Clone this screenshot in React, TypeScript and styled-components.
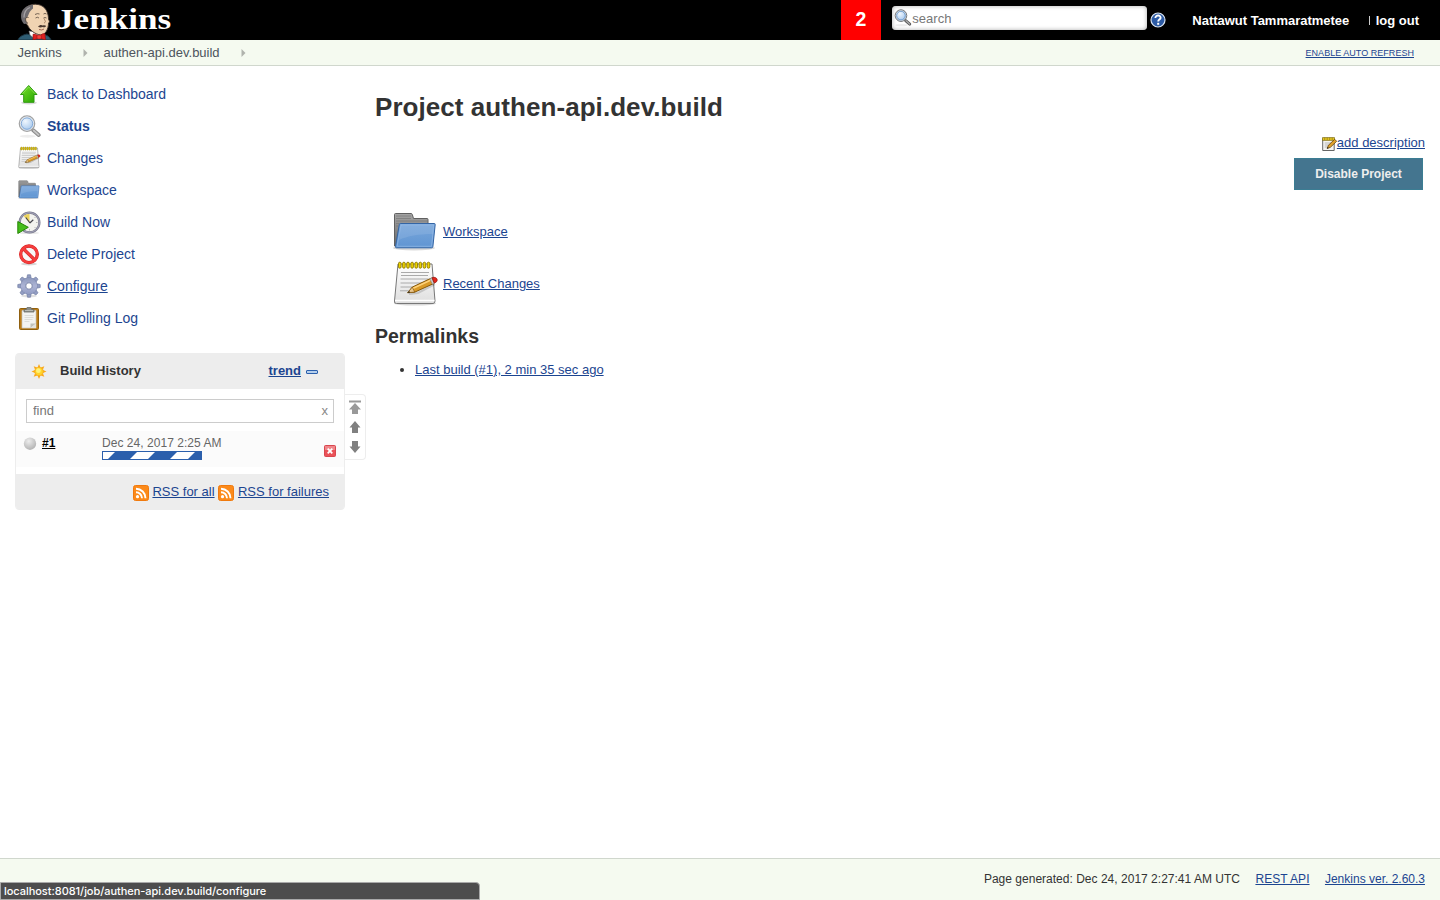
import React from "react";
import styled, { createGlobalStyle } from "styled-components";

const GlobalStyle = createGlobalStyle`
  * { box-sizing: border-box; }
  body {
    margin: 0;
    background: #fff;
    color: #333;
    font: 13px/16px "Liberation Sans", Helvetica, Arial, sans-serif;
  }
`;

const Page = styled.div`
  height: 900px;
  display: flex;
  flex-direction: column;
  position: relative;
  overflow: hidden;
`;

const Link = styled.a<{ $size?: number; $bold?: boolean; $track?: number }>`
  color: #1c4590;
  text-decoration: underline;
  text-underline-offset: 1px;
  white-space: nowrap;
  font-size: ${(p) => p.$size ?? 13}px;
  font-weight: ${(p) => (p.$bold ? 700 : 400)};
  letter-spacing: ${(p) => p.$track ?? 0}px;
`;

/* ---------- Header ---------- */

const Header = styled.header`
  height: 40px;
  flex: none;
  background: #000;
  color: #fff;
  display: flex;
  justify-content: space-between;
`;

const Brand = styled.div`
  display: flex;
  padding-left: 17px;
`;

const BrandName = styled.span`
  font: bold 30px/38px "Liberation Serif", Georgia, serif;
  margin-left: 3px;
  transform: scaleX(1.17);
  transform-origin: left center;
`;

const HeaderTools = styled.div`
  display: flex;
  align-items: center;
  padding-right: 21px;
`;

const AlertCount = styled.div`
  width: 40px;
  height: 40px;
  background: #f00;
  font: bold 19.5px/39px "Liberation Sans", Arial, sans-serif;
  text-align: center;
  margin: 0 11px 0 0;
  padding-right: 1px;
`;

const SearchBox = styled.label`
  width: 255px;
  height: 24px;
  margin: 0 3px 4px 0;
  padding-left: 2px;
  border-radius: 4px;
  background: #fff;
  box-shadow: inset 0 0 4px #aaa;
  display: flex;
  align-items: center;
`;

const SearchInput = styled.input`
  flex: 1;
  border: 0;
  outline: 0;
  padding: 0;
  background: transparent;
  font: 13px "Liberation Sans", Arial, sans-serif;
  &::placeholder { color: #777; }
`;

const HeaderText = styled.span<{ $gap: number; $track?: number }>`
  font-weight: bold;
  margin-left: ${(p) => p.$gap}px;
  letter-spacing: ${(p) => p.$track ?? 0}px;
  white-space: nowrap;
  line-height: 41px;
`;

const Divider = styled.i`
  width: 1px;
  height: 9px;
  background: #ccc;
  margin-left: 20px;
`;

/* ---------- Breadcrumbs ---------- */

const Crumbs = styled.nav`
  height: 26px;
  flex: none;
  background: #f5faf0;
  border-bottom: 1px solid #d0d7cd;
  display: flex;
  align-items: center;
  padding: 0 26px 0 17.6px;
`;

const Crumb = styled.span`
  color: #4d545d;
`;

const CrumbArrow = styled.svg`
  width: 5px;
  height: 8px;
  margin: 1px 15.500px 0 21.300px;
`;

const Spacer = styled.span`
  flex: 1;
`;

/* ---------- Columns ---------- */

const Body = styled.div`
  flex: 1;
  display: flex;
`;

const Sidebar = styled.aside`
  width: 345px;
  padding: 12px 0 0 15px;
`;

const TaskList = styled.div`
  padding-left: 2px;
  margin-bottom: 19px;
`;

const Task = styled.a<{ $active?: boolean; $hover?: boolean }>`
  height: 32px;
  display: flex;
  align-items: center;
  gap: 6px;
  color: #1c4590;
  font-size: 14px;
  font-weight: ${(p) => (p.$active ? 700 : 400)};
  text-decoration: ${(p) => (p.$hover ? "underline" : "none")};
  text-underline-offset: 1px;
`;

const HistoryPanel = styled.section`
  position: relative;
  width: 330px;
  height: 157px;
  border: 1px solid #ededed;
  border-radius: 4px;
`;

const HistoryHead = styled.div`
  height: 36px;
  margin-top: -1px;
  background: #ededed;
  border-radius: 4px 4px 0 0;
  display: flex;
  align-items: center;
  padding: 0 26px 0 15px;
`;

const HistoryTitle = styled.b`
  flex: 1;
  margin-left: 13px;
`;

const CollapseBar = styled.i`
  width: 12px;
  height: 4px;
  margin: 2px 0 0 5px;
  border: 1px solid #2b5fac;
  border-radius: 1px;
  background: #b5cfec;
`;

const FindBox = styled.label`
  height: 24px;
  margin: 10px 10px 8px;
  border: 1px solid #ccc;
  display: flex;
  align-items: center;
  padding: 0 5px 1px 6px;
  color: #888;
`;

const FindInput = styled.input`
  flex: 1;
  border: 0;
  outline: 0;
  padding: 0;
  height: 16px;
  font: 13px/16px "Liberation Sans", Arial, sans-serif;
  &::placeholder { color: #777; }
`;

const BuildRow = styled.div`
  height: 36px;
  background: #fbfbfb;
  display: flex;
  padding: 4px 8px 0 7px;
`;

const BuildNumber = styled.a`
  color: #000;
  font-weight: bold;
  font-size: 12px;
  text-decoration: underline;
  text-underline-offset: 1px;
  width: 60px;
  margin-left: 3px;
`;

const BuildInfo = styled.div`
  flex: 1;
  color: #666;
  font-size: 12px;
  letter-spacing: 0.04px;
`;

const Progress = styled.div`
  width: 100px;
  height: 9px;
  border: 1px solid #2b5fac;
  display: flex;
`;

const CancelIcon = styled.svg`
  margin-top: 10px;
`;

const HistoryFoot = styled.div`
  height: 36px;
  margin-top: 7px;
  background: #ededed;
  border-radius: 0 0 4px 4px;
  display: flex;
  align-items: center;
  justify-content: flex-end;
  padding-right: 15px;
`;

const RssIcon = styled.svg`
  margin: 2px 3.7px 0 3.7px;
`;

const ScrollNav = styled.div`
  position: absolute;
  left: 329px;
  top: 40px;
  width: 21px;
  height: 66px;
  background: #fff;
  border: 1px solid #ededed;
  border-left: 0;
  border-radius: 0 4px 4px 0;
`;

const Main = styled.main`
  flex: 1;
  padding: 25px 15px 0 30px;
`;

const Title = styled.h1`
  margin: 0;
  font-size: 26px;
  line-height: 32px;
  letter-spacing: 0.06px;
`;

const Actions = styled.div`
  display: flex;
  flex-direction: column;
  align-items: flex-end;
  padding-top: 12px;
  gap: 7px;
`;

const DescriptionLink = styled.div`
  display: flex;
  align-items: center;
  height: 16px;
`;

const DisableButton = styled.button`
  width: 129px;
  height: 32px;
  margin-right: 2px;
  padding: 0;
  border: 1px solid #3b7d93;
  background: #44758f;
  color: #eee;
  font: bold 12px "Liberation Sans", Arial, sans-serif;
`;

const Shortcut = styled.div`
  height: 52px;
  display: flex;
  align-items: center;
  gap: 4px;
`;

const Shortcuts = styled.div`
  padding: 16px 0 0 16px;
`;

const Subtitle = styled.h2`
  margin: 14px 0 14px;
  font-size: 19.5px;
  line-height: 24px;
`;

const Permalinks = styled.ul`
  margin: 0;
  padding-left: 40px;
`;

/* ---------- Footer ---------- */

const Footer = styled.footer`
  height: 42px;
  flex: none;
  border-top: 1px solid #d0d7cd;
  background: #f5faf0;
  display: flex;
  align-items: center;
  justify-content: flex-end;
  gap: 15.4px;
  padding: 0 15px 2px 0;
  font-size: 12px;
  letter-spacing: 0.015px;
`;

const StatusBubble = styled.div`
  position: absolute;
  left: 0;
  bottom: 0;
  width: 480px;
  height: 18px;
  padding-left: 3px;
  background: #4d4d4d;
  border: 1px solid #a9a9a9;
  border-radius: 0 4px 0 0;
  color: #fff;
  font: 500 11px/16px Inter, Roboto, sans-serif;
  letter-spacing: -0.04px;
`;

/* ---------- Drawings ---------- */

const Butler = () => (
  <svg width="36" height="40" viewBox="0 0 36 40">
    <path d="M1 40c1-3 4-5 9-6l7 2 9-2c4 1 7 3 8 6z" fill="#2f5d73" stroke="#1b3542" />
    <path d="M12 31l1 4 5 4 8-2 1-4z" fill="#fff" stroke="#777" strokeWidth=".6" />
    <path d="M8 9C11 4 20 2.500 26 6.500c4 3 5.500 8 5.500 13 1.500 2 1 3 0 3.500 0 6-3 12-8 12-6-1-11-5-13-10-5-4-6-11-2.500-16z" fill="#f0d3b2" stroke="#3b302a" strokeWidth=".9" />
    <path d="M16 4.800C9 5 4 10 4 16c0 3 1 6 3 8l3-.5c0-2-1-4 .5-7 1.500-1 1-5 5.500-8z" fill="#6f6c70" />
    <path d="M13 7.500c-4 1.500-6 5-6 10" fill="none" stroke="#a5a1a4" strokeWidth="1.300" />
    <path d="M11.500 17.500c-3.500-1.500-4 4-.5 6" fill="#f0d3b2" stroke="#3b302a" strokeWidth=".8" />
    <path d="M18 14.500q2.500-1.500 4.500-.5M26.500 14q1.500-1.200 3 0M18.500 18q2-1.500 3.500 0M26.500 18q1.500-1 3 0" fill="none" stroke="#54463c" strokeWidth=".8" />
    <path d="M27 18.500c1 2.500 2.500 3.500 0 4.500" fill="none" stroke="#9b7354" strokeWidth=".9" />
    <path d="M21 26.800c1.500-2 3.500-2.200 4.800-1.200 1-.7 2.700-.6 3.400.5-1 1.500-2.400 1.500-3.700.8-1.500.8-3 .5-4.500-.1z" fill="#4b3a31" />
    <path d="M22 29.500q3 1.200 5-.5" fill="none" stroke="#8d4b3a" strokeWidth=".8" />
    <path d="M16 34.200q3-.5 5 1.500h2q2-2.500 5-2l.5 6.300-5-1.500h-2.500L16 40z" fill="#e0201f" stroke="#8a0f12" strokeWidth=".6" />
    <rect x="20" y="35" width="4.300" height="4" rx="1" fill="#f2423c" stroke="#8a0f12" strokeWidth=".5" />
  </svg>
);

const Magnifier = ({ size = 24, dark = false }: { size?: number; dark?: boolean }) => (
  <svg width={size} height={size} viewBox={dark ? "0 0 24 24" : "-.7 -.8 24 24"}>
    <defs>
      <radialGradient id="lens" cx=".4" cy=".35">
        <stop offset="0" stopColor="#f0f7fe" />
        <stop offset="1" stopColor="#b3d0f0" />
      </radialGradient>
    </defs>
    <ellipse cx="10" cy="21.500" rx="8" ry="1.500" fill="#000" opacity=".07" />
    <path d="M15.500 15.500l5.500 4.700" stroke={dark ? "#555" : "#8d8d8d"} strokeWidth="3.900" strokeLinecap="round" />
    <path d="M16 15.700l4.800 4.300" stroke={dark ? "#aaa" : "#c6c6c6"} strokeWidth="1.800" strokeLinecap="round" />
    <circle cx="9.300" cy="8.800" r="7.700" fill="url(#lens)" stroke={dark ? "#666" : "#a3a3a3"} strokeWidth="1.300" />
    <circle cx="9.300" cy="8.800" r="6.600" fill="none" stroke={dark ? "#d0d0d0" : "#e8e8e8"} strokeWidth="1" />
    <circle cx="9.300" cy="8.800" r="5.700" fill="none" stroke={dark ? "#4e83c0" : "#7ea6d6"} strokeWidth=".9" />
  </svg>
);

const HelpIcon = () => (
  <svg width="16" height="16" viewBox="0 0 16 16">
    <circle cx="8" cy="8" r="7" fill="#2d5ba5" stroke="#dce6f3" strokeWidth="1.200" />
    <path d="M5.400 6.100c0-3.600 5.500-3.300 5.200-.2-.2 1.800-2.400 1.700-2.400 3.600" fill="none" stroke="#fff" strokeWidth="1.900" />
    <rect x="7.200" y="10.800" width="2" height="2" fill="#fff" />
  </svg>
);

const UpArrow = () => (
  <svg width="24" height="24" viewBox="0 0 24 24">
    <defs>
      <linearGradient id="green" x2="1" y2="1">
        <stop offset="0" stopColor="#7ae22c" />
        <stop offset="1" stopColor="#24a300" />
      </linearGradient>
    </defs>
    <ellipse cx="12" cy="20.800" rx="8" ry="1.600" fill="#000" opacity=".15" />
    <path d="M11.700 3.500l8.300 9h-3v7.800H6.700v-7.800H3.500z" fill="url(#green)" stroke="#2f9a10" strokeLinejoin="round" />
    <path d="M5.500 11.700l6.200-6.900 6.200 6.900" fill="none" stroke="#a5f26a" strokeWidth=".8" opacity=".7" />
  </svg>
);

const Notepad = ({ size }: { size: number }) => (
  <svg width={size} height={size} viewBox="0 0 48 48">
    <defs>
      <linearGradient id="paper" x2="0" y2="1">
        <stop offset="0" stopColor="#fff" />
        <stop offset="1" stopColor="#dedede" />
      </linearGradient>
    </defs>
    <ellipse cx="24" cy="43.500" rx="21" ry="2" fill="#000" opacity=".15" />
    <path d="M7 4h34l3 37q0 2.500-2 2.500H5.500q-2.500 0-2-2.500z" fill="url(#paper)" stroke="#777" />
    <path d="M4 40.500h39.500" stroke="#fff" strokeWidth="1.500" />
    <path d="M10 12.500h28M10 15.500h27M9.500 19h28M9.500 23h24M9.500 27h13M9 30.800h10" stroke="#aaa" />
    {[7.5, 11.6, 15.7, 19.8, 23.9, 28, 32.1, 36.2].map((x) => (
      <rect key={x} x={x} y="2.200" width="2.600" height="6" rx="1.300" fill="#edd400" stroke="#8f7900" strokeWidth=".9" />
    ))}
    <path d="M18 34l9-1 17-9" fill="none" stroke="#000" strokeWidth="2" opacity=".15" />
    <path d="M16.700 32.700l4.600-5.600L40.500 18l2.500 5.400-19.300 8.800z" fill="#d99a27" stroke="#7a4d00" strokeWidth=".9" />
    <path d="M21.700 28.500l19.300-9" stroke="#ffd27a" strokeWidth="1.400" />
    <path d="M16.700 32.700l4.600-5.600 2.400 5z" fill="#e9c58b" stroke="#7a4d00" strokeWidth=".6" />
    <path d="M16.500 33l1.700-2 .9 1.500z" fill="#222" />
    <path d="M38.800 18.800l2-1 2.500 5.400-2 1z" fill="#ccc" stroke="#777" strokeWidth=".5" />
    <path d="M41 17.700c4-1.700 7 2.200 4 4.500l-1.700.9z" fill="#e3251c" stroke="#8d1009" strokeWidth=".7" />
  </svg>
);

const EditNote = () => (
  <svg width="16" height="16" viewBox="-.7 -1 16 16">
    <path d="M1 2.500h11.500v12H1z" fill="#f4f4f2" stroke="#666" />
    <path d="M.8 1.500h12v3H.8z" fill="#e3c521" stroke="#77671a" strokeWidth=".6" />
    <path d="M3 1.500v2.500M5.500 1.500v2.500M8 1.500v2.500M10.500 1.500v2.500" stroke="#8b7715" strokeWidth=".7" />
    <path d="M3 7h7M3 9h5M3 11h3" stroke="#aaa" strokeWidth=".8" />
    <path d="M5.500 12.500l1.200-3.200 6.300-6 2 2-6.300 6z" fill="#e0a22e" stroke="#65440b" strokeWidth=".8" />
    <path d="M5.300 12.800l.6-1.700 1.100 1z" fill="#222" />
  </svg>
);

const Folder = ({ size }: { size: number }) => (
  <svg width={size} height={size} viewBox="0 0 48 48">
    <defs>
      <linearGradient id="folder" x2="0" y2="1">
        <stop offset="0" stopColor="#79a7dc" />
        <stop offset="1" stopColor="#6095d2" />
      </linearGradient>
      <linearGradient id="folderBack" x2="0" y2="1">
        <stop offset="0" stopColor="#a5a5a5" />
        <stop offset="1" stopColor="#686868" />
      </linearGradient>
    </defs>
    <ellipse cx="23" cy="40" rx="21" ry="2.400" fill="#000" opacity=".15" />
    <path d="M3.500 38V6.500q0-1 1-1h15.500q1 0 1.300 1l1.200 4h13.500q1 0 1 1v26z" fill="url(#folderBack)" stroke="#606060" />
    <path d="M5 8h15M5 10.500h15M5 13h31M5 15.500h3M5 18h2" stroke="#777" strokeWidth=".7" />
    <path d="M9.300 15.500h34q1 0 .9 1l-2.300 22q-.2 1.300-1.300 1.300H5.500q-1.200 0-1-1.300L8.300 16.500q.1-1 1-1z" fill="url(#folder)" stroke="#3465a4" />
    <path d="M10 16.800h32.800l-2.200 21.500H6.100z" fill="none" stroke="#9cc0ea" strokeWidth=".6" />
    <path d="M10 17h32.500l-.8 9C28 26 16 28 8 32z" fill="#fff" opacity=".1" />
  </svg>
);

const BuildClock = () => (
  <svg width="24" height="24" viewBox="0 -.5 24 24">
    <ellipse cx="12" cy="22.500" rx="10" ry="1" fill="#000" opacity=".1" />
    <circle cx="12.500" cy="12" r="9.900" fill="#f3f3ef" stroke="#77778c" strokeWidth="2.200" />
    <circle cx="12.500" cy="12" r="9.900" fill="none" stroke="#aeaec2" strokeWidth=".9" />
    <path d="M12.500 12L6.500 5.500q3-2.300 6-2z" fill="#ecd35c" />
    <path d="M13 12.500L8.800 7M12.800 12.500l3.500-3.200" stroke="#45454c" strokeWidth="1.200" />
    <path d="M20.500 12H19M18.500 6.500l-1 1M18.500 17.500l-1-1M12.500 18.500V20" stroke="#aaa" strokeWidth=".8" />
    <path d="M.8 11v12l10.500-6.200z" fill="#45bd1b" stroke="#258505" strokeLinejoin="round" />
  </svg>
);

const NoEntry = () => (
  <svg width="24" height="24" viewBox="0 0 24 24">
    <ellipse cx="12" cy="22" rx="8" ry="1.400" fill="#000" opacity=".16" />
    <circle cx="12" cy="12.300" r="8.300" fill="#f7f7f7" stroke="#d42020" strokeWidth="3.300" />
    <path d="M6.300 6.700l11.500 11.300" stroke="#d42020" strokeWidth="3.300" />
    <circle cx="12" cy="12.300" r="8.300" fill="none" stroke="#f53d3d" strokeWidth="2.300" />
    <path d="M6.200 6.600l11.600 11.400" stroke="#f53d3d" strokeWidth="2.300" />
  </svg>
);

const Gear = () => (
  <svg width="24" height="24" viewBox="0 0 24 24">
    <defs>
      <linearGradient id="gear" gradientUnits="userSpaceOnUse" x1="0" y1="0" x2="0" y2="24">
        <stop offset="0" stopColor="#7f8db2" />
        <stop offset=".5" stopColor="#adb4d5" />
        <stop offset="1" stopColor="#8490ba" />
      </linearGradient>
    </defs>
    <ellipse cx="12" cy="22" rx="8" ry="1.500" fill="#000" opacity=".12" />
    {[0, 45, 90, 135, 180, 225, 270, 315].map((a) => (
      <path key={a} d="M9.500 6L10.500.8h3l1 5.200z" transform={`rotate(${a} 12 12)`} fill="#929dc2" stroke="#747fa5" strokeWidth=".7" />
    ))}
    <circle cx="12" cy="12" r="5.900" fill="none" stroke="#747fa5" strokeWidth="5.200" />
    <circle cx="12" cy="12" r="5.900" fill="none" stroke="url(#gear)" strokeWidth="4.600" />
    <circle cx="12" cy="12" r="3.200" fill="#fff" stroke="#747fa5" strokeWidth=".8" />
  </svg>
);

const Clipboard = () => (
  <svg width="24" height="24" viewBox="0 0 24 24">
    <rect x="2.500" y="2.500" width="19" height="21" rx="1" fill="#bd7d18" stroke="#90600f" />
    <path d="M5 4.500h14v17.500H5z" fill="#f3f3f1" stroke="#c5c5c0" strokeWidth=".7" />
    <path d="M7.500 9.500h9M7.500 11.500h9M7.500 13.500h8M7.500 15.500h5" stroke="#d6d6d2" strokeWidth=".8" />
    <path d="M13.500 22v-4.500H19z" fill="#c0c1bb" />
    <path d="M13.500 22l5.500-4.500V22z" fill="#e3e3e0" />
    <path d="M7 6V3.500h2.300L10 1.500h4l.7 2H17V6z" fill="#8b8d88" stroke="#6a6c68" strokeWidth=".8" />
    <path d="M8 4.500h8" stroke="#c5c6c2" strokeWidth=".8" />
  </svg>
);

const Sun = () => (
  <svg width="16" height="16" viewBox="0 0 16 16">
    {[0, 45, 90, 135, 180, 225, 270, 315].map((a) => (
      <path key={a} d="M6.500 4L8 .5 9.500 4z" transform={`rotate(${a} 8 8.500) translate(0 .5)`} fill="#f9a81c" />
    ))}
    <circle cx="8" cy="8.500" r="4.200" fill="#ffd42a" stroke="#f8ae1c" strokeWidth=".9" />
    <circle cx="7.400" cy="7.700" r="2.400" fill="#fff27b" />
  </svg>
);

const Ball = () => (
  <svg width="16" height="16" viewBox="0 0 16 16">
    <defs>
      <radialGradient id="ball" cx=".4" cy=".3" r=".75">
        <stop offset="0" stopColor="#ededed" />
        <stop offset=".6" stopColor="#c8c8c8" />
        <stop offset="1" stopColor="#b0b0b0" />
      </radialGradient>
    </defs>
    <circle cx="7" cy="8.700" r="6.200" fill="url(#ball)" />
  </svg>
);

const ProgressStripes = () => (
  <svg width="98" height="7" viewBox="0 0 98 7">
    <rect width="98" height="7" fill="#fff" />
    {[5, 45, 85].map((x) => (
      <path key={x} d={`M${x} 7l7-7h22l-7 7z`} fill="#2b5fac" />
    ))}
  </svg>
);

const Cancel = () => (
  <CancelIcon width="12" height="12" viewBox="0 0 12 12">
    <rect x=".5" y=".5" width="11" height="11" rx="1" fill="#ea5258" stroke="#d8474f" />
    <path d="M1 1h10v4H1z" fill="#fff" opacity=".3" />
    <path d="M3.700 3.700l4.600 4.600M8.300 3.700L3.700 8.300" stroke="#fff" strokeWidth="1.800" />
  </CancelIcon>
);

const Rss = () => (
  <RssIcon width="16" height="16" viewBox="0 0 16 16">
    <rect x=".5" y=".5" width="15" height="15" rx="2" fill="#fc8a1a" stroke="#f07a0e" />
    <circle cx="4.500" cy="11.700" r="1.600" fill="#fff" />
    <path d="M3 7.200a6 6 0 0 1 6 6M3 3.700A9.500 9.500 0 0 1 12.500 13.200" fill="none" stroke="#fff" strokeWidth="1.900" />
  </RssIcon>
);

const NavArrows = () => (
  <svg width="20" height="64" viewBox="0 0 20 64">
    <g fill="#999">
      <path d="M4 5.500h12v2H4zM10 8l6 6.500h-3V19H7v-4.500H4z" />
      <path d="M10 26l5.500 6.500H13V38H7v-5.500H4.500z" fill="#808080" />
      <path d="M10 58l5.500-6.500H13V46H7v5.500H4.500z" fill="#808080" />
    </g>
  </svg>
);

const Arrow = () => (
  <CrumbArrow viewBox="0 0 5 8">
    <path d="M.5 0l4 4-4 4z" fill="#b0b3ad" />
  </CrumbArrow>
);

const tasks = [
  { label: "Back to Dashboard", icon: <UpArrow /> },
  { label: "Status", icon: <Magnifier />, active: true },
  { label: "Changes", icon: <Notepad size={24} /> },
  { label: "Workspace", icon: <Folder size={24} /> },
  { label: "Build Now", icon: <BuildClock /> },
  { label: "Delete Project", icon: <NoEntry /> },
  { label: "Configure", icon: <Gear />, hover: true },
  { label: "Git Polling Log", icon: <Clipboard /> },
];

export default function App() {
  return (
    <Page>
      <GlobalStyle />
      <Header>
        <Brand>
          <Butler />
          <BrandName>Jenkins</BrandName>
        </Brand>
        <HeaderTools>
          <AlertCount>2</AlertCount>
          <SearchBox>
            <Magnifier size={18} dark />
            <SearchInput placeholder="search" />
          </SearchBox>
          <HelpIcon />
          <HeaderText $gap={26} $track={-0.02}>Nattawut Tammaratmetee</HeaderText>
          <Divider />
          <HeaderText $gap={5.5}>log out</HeaderText>
        </HeaderTools>
      </Header>
      <Crumbs>
        <Crumb>Jenkins</Crumb>
        <Arrow />
        <Crumb>authen-api.dev.build</Crumb>
        <Arrow />
        <Spacer />
        <Link $size={9} $track={0.03}>ENABLE AUTO REFRESH</Link>
      </Crumbs>
      <Body>
        <Sidebar>
          <TaskList>
            {tasks.map((t) => (
              <Task key={t.label} $active={t.active} $hover={t.hover}>
                {t.icon}
                <span>{t.label}</span>
              </Task>
            ))}
          </TaskList>
          <HistoryPanel>
            <HistoryHead>
              <Sun />
              <HistoryTitle>Build History</HistoryTitle>
              <Link $bold>trend</Link>
              <CollapseBar />
            </HistoryHead>
            <FindBox>
              <FindInput placeholder="find" />x
            </FindBox>
            <BuildRow>
              <Ball />
              <BuildNumber>#1</BuildNumber>
              <BuildInfo>
                Dec 24, 2017 2:25 AM
                <Progress>
                  <ProgressStripes />
                </Progress>
              </BuildInfo>
              <Cancel />
            </BuildRow>
            <HistoryFoot>
              <Rss />
              <Link>RSS for all</Link>
              <Rss />
              <Link>RSS for failures</Link>
            </HistoryFoot>
            <ScrollNav>
              <NavArrows />
            </ScrollNav>
          </HistoryPanel>
        </Sidebar>
        <Main>
          <Title>Project authen-api.dev.build</Title>
          <Actions>
            <DescriptionLink>
              <EditNote />
              <Link>add description</Link>
            </DescriptionLink>
            <DisableButton>Disable Project</DisableButton>
          </Actions>
          <Shortcuts>
            <Shortcut>
              <Folder size={48} />
              <Link>Workspace</Link>
            </Shortcut>
            <Shortcut>
              <Notepad size={48} />
              <Link>Recent Changes</Link>
            </Shortcut>
          </Shortcuts>
          <Subtitle>Permalinks</Subtitle>
          <Permalinks>
            <li>
              <Link>Last build (#1), 2 min 35 sec ago</Link>
            </li>
          </Permalinks>
        </Main>
      </Body>
      <Footer>
        <span>Page generated: Dec 24, 2017 2:27:41 AM UTC</span>
        <Link $size={12} $track={0.04}>REST API</Link>
        <Link $size={12}>Jenkins ver. 2.60.3</Link>
      </Footer>
      <StatusBubble>localhost:8081/job/authen-api.dev.build/configure</StatusBubble>
    </Page>
  );
}
